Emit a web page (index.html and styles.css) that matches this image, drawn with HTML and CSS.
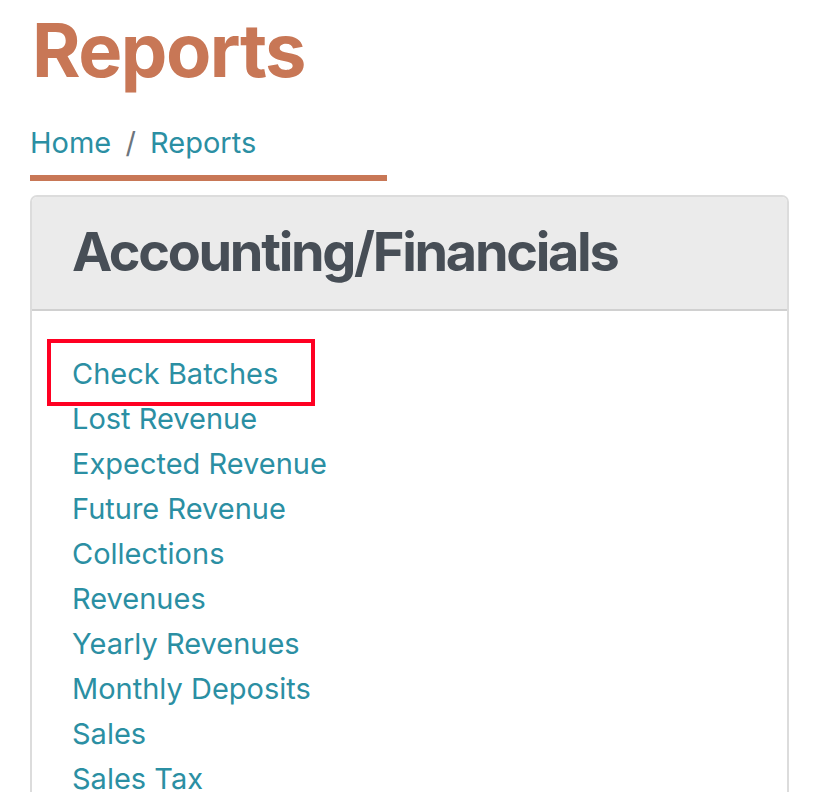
FILE: index.html
```html
<!DOCTYPE html>
<html>
<head>
    <title>Reports</title>
    <meta name="viewport" content="width=device-width, initial-scale=1.0">
    <link rel="stylesheet" href="styles.css">
</head>
<body>
    <div class="page">
        <h1 class="title">Reports</h1>

        <nav class="crumbs">
            <a href="#">Home</a>
            <span class="sep">/</span>
            <a href="#">Reports</a>
        </nav>

        <div class="card">
            <div class="card-head">
                <h2>Accounting/Financials</h2>
            </div>
            <ul class="reports">
                <li><a href="#" class="marked">Check Batches</a></li>
                <li><a href="#">Lost Revenue</a></li>
                <li><a href="#">Expected Revenue</a></li>
                <li><a href="#">Future Revenue</a></li>
                <li><a href="#">Collections</a></li>
                <li><a href="#">Revenues</a></li>
                <li><a href="#">Yearly Revenues</a></li>
                <li><a href="#">Monthly Deposits</a></li>
                <li><a href="#">Sales</a></li>
                <li><a href="#">Sales Tax</a></li>
            </ul>
        </div>
    </div>
</body>
</html>
```

FILE: styles.css
```css
/* Base styles */
* {
    box-sizing: border-box;
    margin: 0;
    padding: 0;
}

body {
    font-family: Inter, "Noto Sans", sans-serif;
    background-color: #fff;
    color: #474e56;
    overflow: hidden;
}

a {
    color: #2b8fa3;
    text-decoration: none;
}

.page {
    padding: 6px 33px 0 30px;
    width: 822px;
}

.title {
    color: #c87756;
    font-size: 74px;
    font-weight: 700;
    line-height: 1.2;
    letter-spacing: -1.5px;
    padding-left: 2px;
}

/* Breadcrumb with the accent rule under it */
.crumbs {
    width: 357px;
    margin-top: 26px;
    padding-bottom: 11px;
    border-bottom: 6px solid #c87756;
    font-size: 29px;
    line-height: 1.5;
}

.crumbs .sep {
    color: #6c757d;
    margin: 0 6px;
}

.card {
    margin-top: 14px;
    border: 2px solid #dcdcdc;
    border-radius: 7px;
    overflow: hidden;
}

.card-head {
    background-color: #ebebeb;
    border-bottom: 2px solid #d0d0d0;
    padding: 23px 40px 24px;
}

.card-head h2 {
    font-size: 54px;
    font-weight: 700;
    line-height: 1.2;
    letter-spacing: -2.3px;
}

.reports {
    list-style: none;
    padding: 40px 40px 20px;
    font-size: 29px;
    line-height: 45px;
}

/* Annotation box around the highlighted report */
.marked {
    position: relative;
}

.marked::after {
    content: '';
    position: absolute;
    left: -25px;
    right: -37px;
    top: -17px;
    bottom: -15px;
    border: 4px solid #ff0022;
}
```
